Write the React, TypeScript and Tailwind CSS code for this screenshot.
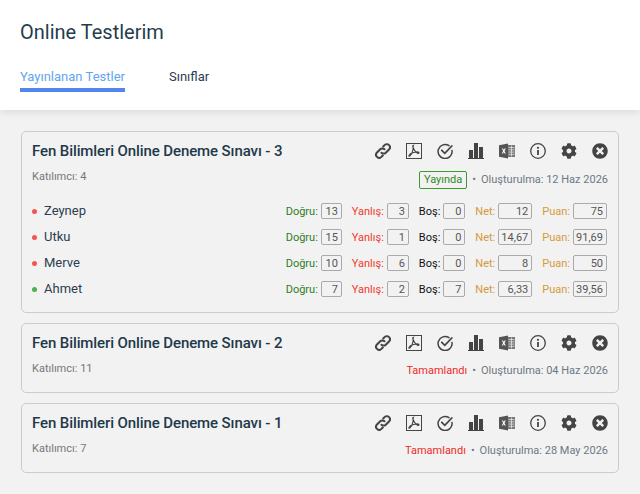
import { FaCog, FaTimesCircle } from "react-icons/fa";

type Student = {
	name: string;
	passed?: boolean;
	correct: string;
	wrong: string;
	empty: string;
	net: string;
	score: string;
};

const students: Student[] = [
	{ name: "Zeynep", correct: "13", wrong: "3", empty: "0", net: "12", score: "75" },
	{ name: "Utku", correct: "15", wrong: "1", empty: "0", net: "14,67", score: "91,69" },
	{ name: "Merve", correct: "10", wrong: "6", empty: "0", net: "8", score: "50" },
	{ name: "Ahmet", passed: true, correct: "7", wrong: "2", empty: "7", net: "6,33", score: "39,56" },
];

function LinkIcon() {
	return (
		<svg viewBox="0 0 16 16" className="w-4 h-4" fill="none" stroke="#444" strokeWidth="2" strokeLinecap="round">
			<path d="M6.500 9.700a3 3 0 0 0 4.300 0l3.200-3.200a3.100 3.100 0 0 0-4.400-4.400L8.200 3.500" />
			<path d="M9.500 6.300a3 3 0 0 0-4.300 0L2 9.500a3.100 3.100 0 0 0 4.400 4.400l1.400-1.400" />
		</svg>
	);
}

function PdfIcon() {
	return (
		<svg viewBox="0 0 16 16" className="w-4 h-4" fill="none" stroke="#444">
			<rect x="0.500" y="0.500" width="15" height="15" />
			<path strokeWidth="1.100" d="M7.300 2.500c-.5 1 .2 3.200.9 4.400 1 1.700 2.200 2.800 3.300 3.300 1 .4 1.800-.2 1.300-.8-.6-.7-3-.5-5.300.1-2.300.6-4.100 1.700-4.600 2.900-.3.800.5 1.100 1.100.5 1-1 2.400-3.800 2.900-5.800.3-1.500.3-3.200-.2-4-.1-.2-.3-.2-.4-.1z" />
		</svg>
	);
}

function CheckIcon() {
	return (
		<svg viewBox="0 0 16 16" className="w-4 h-4" fill="none" stroke="#444" strokeWidth="1.500" strokeLinecap="round">
			<path d="M15 7.400A7 7 0 1 1 12 2.700" />
			<path strokeWidth="1.800" d="M4.800 7.300l3 3 7-7.300" />
		</svg>
	);
}

function BarsIcon() {
	return (
		<svg viewBox="0 0 16 16" className="w-4 h-4" fill="#444">
			<rect x="1" y="7" width="4" height="8" />
			<rect x="6" y="0" width="4" height="15" />
			<rect x="11" y="4" width="4" height="11" />
			<rect x="0" y="15" width="16" height="1" />
		</svg>
	);
}

function ExcelIcon() {
	return (
		<svg viewBox="0 0 16 16" className="w-4 h-4">
			<path fill="#555" d="M0 2.200 9 .500v15L0 13.800z" />
			<path fill="#fff" d="M2.800 5.500h1.200l.8 1.500.8-1.500h1.200L5.500 8l1.300 2.500H5.600L4.800 9l-.8 1.500H2.800L4.100 8z" />
			<path fill="#777" d="M9 2h7v12H9z" />
			<path stroke="#ececec" strokeWidth="0.700" d="M9.500 4.500h6M9.500 6.800h6M9.500 9.100h6M9.500 11.400h6M12.500 2.500v11" />
		</svg>
	);
}

function InfoIcon() {
	return (
		<svg viewBox="0 0 16 16" className="w-4 h-4" fill="none" stroke="#444" strokeWidth="1.300">
			<circle cx="8" cy="8" r="7.300" />
			<circle cx="8" cy="4.800" r="1.100" fill="#444" stroke="none" />
			<path strokeWidth="1.800" d="M8 7v5" />
		</svg>
	);
}

function Toolbar() {
	return (
		<div className="flex items-center gap-[15px] text-[#444]">
			<LinkIcon />
			<PdfIcon />
			<CheckIcon />
			<BarsIcon />
			<ExcelIcon />
			<InfoIcon />
			<FaCog className="w-4 h-4" />
			<FaTimesCircle className="w-4 h-4" />
		</div>
	);
}

function Stat({ label, value, tone, box }: { label: string; value: string; tone: string; box: string }) {
	return (
		<div className="flex items-center gap-[3px]">
			<span className={`${tone} pt-[2px]`}>{label}</span>
			<span className={`${box} h-[16px] border border-[#aaa] rounded-[2px] text-right pr-[3px] leading-[15px] text-[#555]`}>
				{value}
			</span>
		</div>
	);
}

function Row({ s }: { s: Student }) {
	return (
		<div className="h-[26px] flex items-center justify-between">
			<div className="flex items-center gap-[7px] text-[13px] text-[#2c3e50]">
				<span className={`w-[5px] h-[5px] rounded-full ${s.passed ? "bg-[#4caf50]" : "bg-[#f4564e]"}`} />
				{s.name}
			</div>
			<div className="flex items-center gap-[10px] text-[11px] mr-[1px]">
				<Stat label="Doğru:" value={s.correct} tone="text-[#2e7d1e]" box="w-[21px]" />
				<Stat label="Yanlış:" value={s.wrong} tone="text-[#f0392b]" box="w-[22px]" />
				<Stat label="Boş:" value={s.empty} tone="text-[#111]" box="w-[22px]" />
				<Stat label="Net:" value={s.net} tone="text-[#d59a3c]" box="w-[34px]" />
				<Stat label="Puan:" value={s.score} tone="text-[#d59a3c]" box="w-[34px]" />
			</div>
		</div>
	);
}

function TestCard({ no, count, date, live, rows }: { no: number; count: number; date: string; live?: boolean; rows?: Student[] }) {
	return (
		<div className="border border-[#ccc] rounded-[5px] px-[10px] pt-[7px] pb-[10px] bg-[#f2f2f2]">
			<div className="flex items-center justify-between h-[24px]">
				<h2 className="text-[15px] font-medium text-[#22384a] tracking-[-0.1px]">
					Fen Bilimleri Online Deneme Sınavı - {no}
				</h2>
				<Toolbar />
			</div>
			<div className="flex items-start justify-between h-[20px] mt-[7px] text-[11px]">
				<span className="text-[#777] -mt-[1px]">Katılımcı: {count}</span>
				<div className="flex items-center gap-[5px] text-[#6d7883] mt-[1px]">
					{live ? (
						<span className="border border-[#3c9a2e] rounded-[2px] px-[4px] h-[18px] leading-[16px] text-[#2e8b1e]">Yayında</span>
					) : (
						<span className="text-[#f0281e]">Tamamlandı</span>
					)}
					<span>•</span>
					<span>Oluşturulma: {date}</span>
				</div>
			</div>
			{rows && (
				<div className="mt-[8px]">
					{rows.map((s) => (
						<Row key={s.name} s={s} />
					))}
				</div>
			)}
		</div>
	);
}

export default function App() {
	return (
		<div className="min-h-[494px] bg-[#f2f2f2] font-['Roboto',sans-serif]">
			<header className="h-[110px] bg-white shadow-[0_2px_8px_rgba(0,0,0,0.1)] px-5 pt-[19px]">
				<h1 className="text-[20px] leading-[26px] text-[#263c4d]">Online Testlerim</h1>
				<nav className="flex gap-[44px] mt-[18px] text-[13px]">
					<span className="pt-[5px] h-[29px] leading-[18px] border-b-4 border-[#5286ee] text-[#64a5ee]">Yayınlanan Testler</span>
					<span className="pt-[5px] leading-[18px] text-[#2c3e50]">Sınıflar</span>
				</nav>
			</header>
			<main className="pt-[21px] px-[21px] flex flex-col gap-[10px]">
				<TestCard no={3} count={4} date="12 Haz 2026" live rows={students} />
				<TestCard no={2} count={11} date="04 Haz 2026" />
				<TestCard no={1} count={7} date="28 May 2026" />
			</main>
		</div>
	);
}
